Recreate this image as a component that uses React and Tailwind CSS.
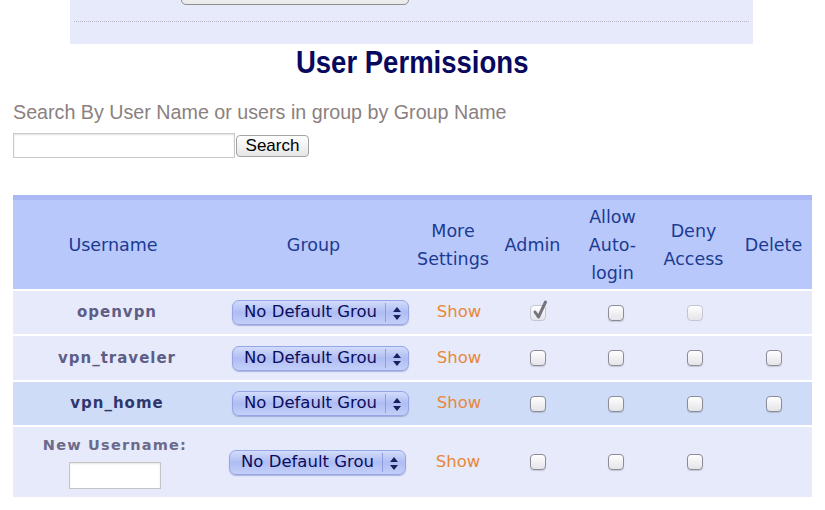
import React from "react";

const dv = { fontFamily: '"DejaVu Sans", sans-serif' };
const lib = { fontFamily: '"Liberation Sans", Arial, sans-serif' };

function Select() {
  return (
    <div className="relative flex h-[25px] w-[177px] items-center rounded-[7px] border border-[#95a5e6] bg-gradient-to-b from-[#d3dcfb] via-[#aebdf3] to-[#c4d0f9] shadow-[0_1px_1px_rgba(60,80,160,0.35)]">
      <span className="pl-[11px] text-[16.5px] leading-none text-[#0c0c5c]" style={dv}>
        No Default Grou
      </span>
      <div className="absolute right-[22px] top-[2px] bottom-[2px] w-px bg-[#8d9de0]" />
      <svg className="absolute right-[7px] top-[6px]" width="8" height="13" viewBox="0 0 8 13">
        <path d="M4 0 L8 5 L0 5 Z" fill="#1a1f5e" />
        <path d="M0 8 L8 8 L4 13 Z" fill="#1a1f5e" />
      </svg>
    </div>
  );
}

function Box({ checked, disabled }) {
  return (
    <div
      className={
        "relative h-[16px] w-[16px] rounded-[4px] border bg-gradient-to-b from-[#ffffff] to-[#e4e4ea] " +
        (disabled ? "border-[#c4c6d2]" : "border-[#8c8c96] shadow-[0_1px_1px_rgba(0,0,0,0.15)]")
      }
    >
      {checked && (
        <svg className="absolute left-[1px] top-[-6px]" width="16" height="20" viewBox="0 0 16 20">
          <path d="M3 12 L6.5 17 L13.5 2" stroke="#74747c" strokeWidth="3" fill="none" strokeLinecap="round" strokeLinejoin="round" />
        </svg>
      )}
    </div>
  );
}

const cols = "grid grid-cols-[200px_201px_78px_81px_79px_83px_77px]";

function Row({ name, bg, nameColor, h, del = true, adminChecked, denyDisabled }) {
  return (
    <div className={cols + " items-center " + bg + " " + h}>
      <div className="flex justify-center pl-[8px]">
        <span className={"text-[15px] font-bold tracking-[1px] " + nameColor} style={dv}>
          {name}
        </span>
      </div>
      <div className="flex justify-center pl-[14px]">
        <Select />
      </div>
      <div className="flex justify-center pl-[12px]">
        <span className="text-[16.5px] text-[#e8873a]" style={dv}>Show</span>
      </div>
      <div className="flex justify-center pl-[11px]">
        <Box checked={adminChecked} disabled={adminChecked} />
      </div>
      <div className="flex justify-center pl-[7px]">
        <Box />
      </div>
      <div className="flex justify-center pl-[3px]">
        <Box disabled={denyDisabled} />
      </div>
      <div className="flex justify-center">{del && <Box />}</div>
    </div>
  );
}

export default function App() {
  return (
    <div className="relative h-[510px] w-[825px] overflow-hidden bg-white">
      {/* top panel */}
      <div className="ml-[70px] flex h-[44px] w-[683px] flex-col bg-[#e6eafb]">
        <div className="ml-[111px] mt-[-20px] h-[25px] w-[228px] rounded-[5px] border border-[#8f8f8f] bg-gradient-to-b from-white to-[#e9e9e9]" />
        <div className="mx-[4px] mt-[16px] border-t border-dotted border-[#b9b9c4]" />
      </div>

      {/* title */}
      <div className="flex h-[36px] items-center justify-center">
        <h1 className="inline-block scale-x-[0.86] text-[32px] font-bold leading-none text-[#08085e]" style={lib}>
          User Permissions
        </h1>
      </div>

      {/* search */}
      <div className="mt-[20px] pl-[13px] text-[19.7px] leading-[24px] text-[#8b7f80]" style={lib}>
        Search By User Name or users in group by Group Name
      </div>
      <div className="mt-[9px] flex items-start pl-[13px]">
        <div className="h-[25px] w-[222px] border border-[#c9c9c9] bg-white shadow-[inset_0_1px_2px_rgba(0,0,0,0.12)]" />
        <div className="ml-[1px] mt-[2px] flex h-[22px] w-[73px] items-center justify-center rounded-[4px] border border-[#a3a3a3] bg-gradient-to-b from-white to-[#e6e6e6] text-[17px] text-black" style={lib}>
          Search
        </div>
      </div>

      {/* table */}
      <div className="ml-[13px] mt-[37px] w-[799px]">
        <div className="h-[5px] bg-[#aab9f5]" />
        <div className={cols + " h-[89px] items-center bg-[#b9c8fa] text-[17.5px] leading-[28px] text-[#1b3b92]"} style={dv}>
          <div className="text-center">Username</div>
          <div className="text-center">Group</div>
          <div className="text-center">More<br />Settings</div>
          <div className="text-center">Admin</div>
          <div className="text-center">Allow<br />Auto-<br />login</div>
          <div className="text-center">Deny<br />Access</div>
          <div className="text-center">Delete</div>
        </div>
        <div className="flex flex-col gap-[2px] pt-[2px]">
          <Row name="openvpn" bg="bg-[#e6eafb]" nameColor="text-[#5e5d86]" h="h-[43px]" del={false} adminChecked denyDisabled />
          <Row name="vpn_traveler" bg="bg-[#e6eafb]" nameColor="text-[#5e5d86]" h="h-[44px]" />
          <Row name="vpn_home" bg="bg-[#cfdcf8]" nameColor="text-[#2e376c]" h="h-[43px]" />
          <div className={cols + " h-[70px] items-center bg-[#e6eafb]"}>
            <div className="flex flex-col items-center pl-[4px]">
              <span className="text-[14.5px] font-bold tracking-[1.2px] text-[#6b6a8a]" style={dv}>New Username:</span>
              <div className="mt-[5px] h-[27px] w-[92px] border border-[#c4c4c4] bg-white shadow-[inset_0_1px_2px_rgba(0,0,0,0.1)]" />
            </div>
            <div className="flex justify-center pl-[8px]">
              <Select />
            </div>
            <div className="flex justify-center pl-[10px]">
              <span className="text-[16.5px] text-[#e8873a]" style={dv}>Show</span>
            </div>
            <div className="flex justify-center pl-[11px]"><Box /></div>
            <div className="flex justify-center pl-[7px]"><Box /></div>
            <div className="flex justify-center pl-[3px]"><Box /></div>
            <div />
          </div>
        </div>
      </div>
    </div>
  );
}
